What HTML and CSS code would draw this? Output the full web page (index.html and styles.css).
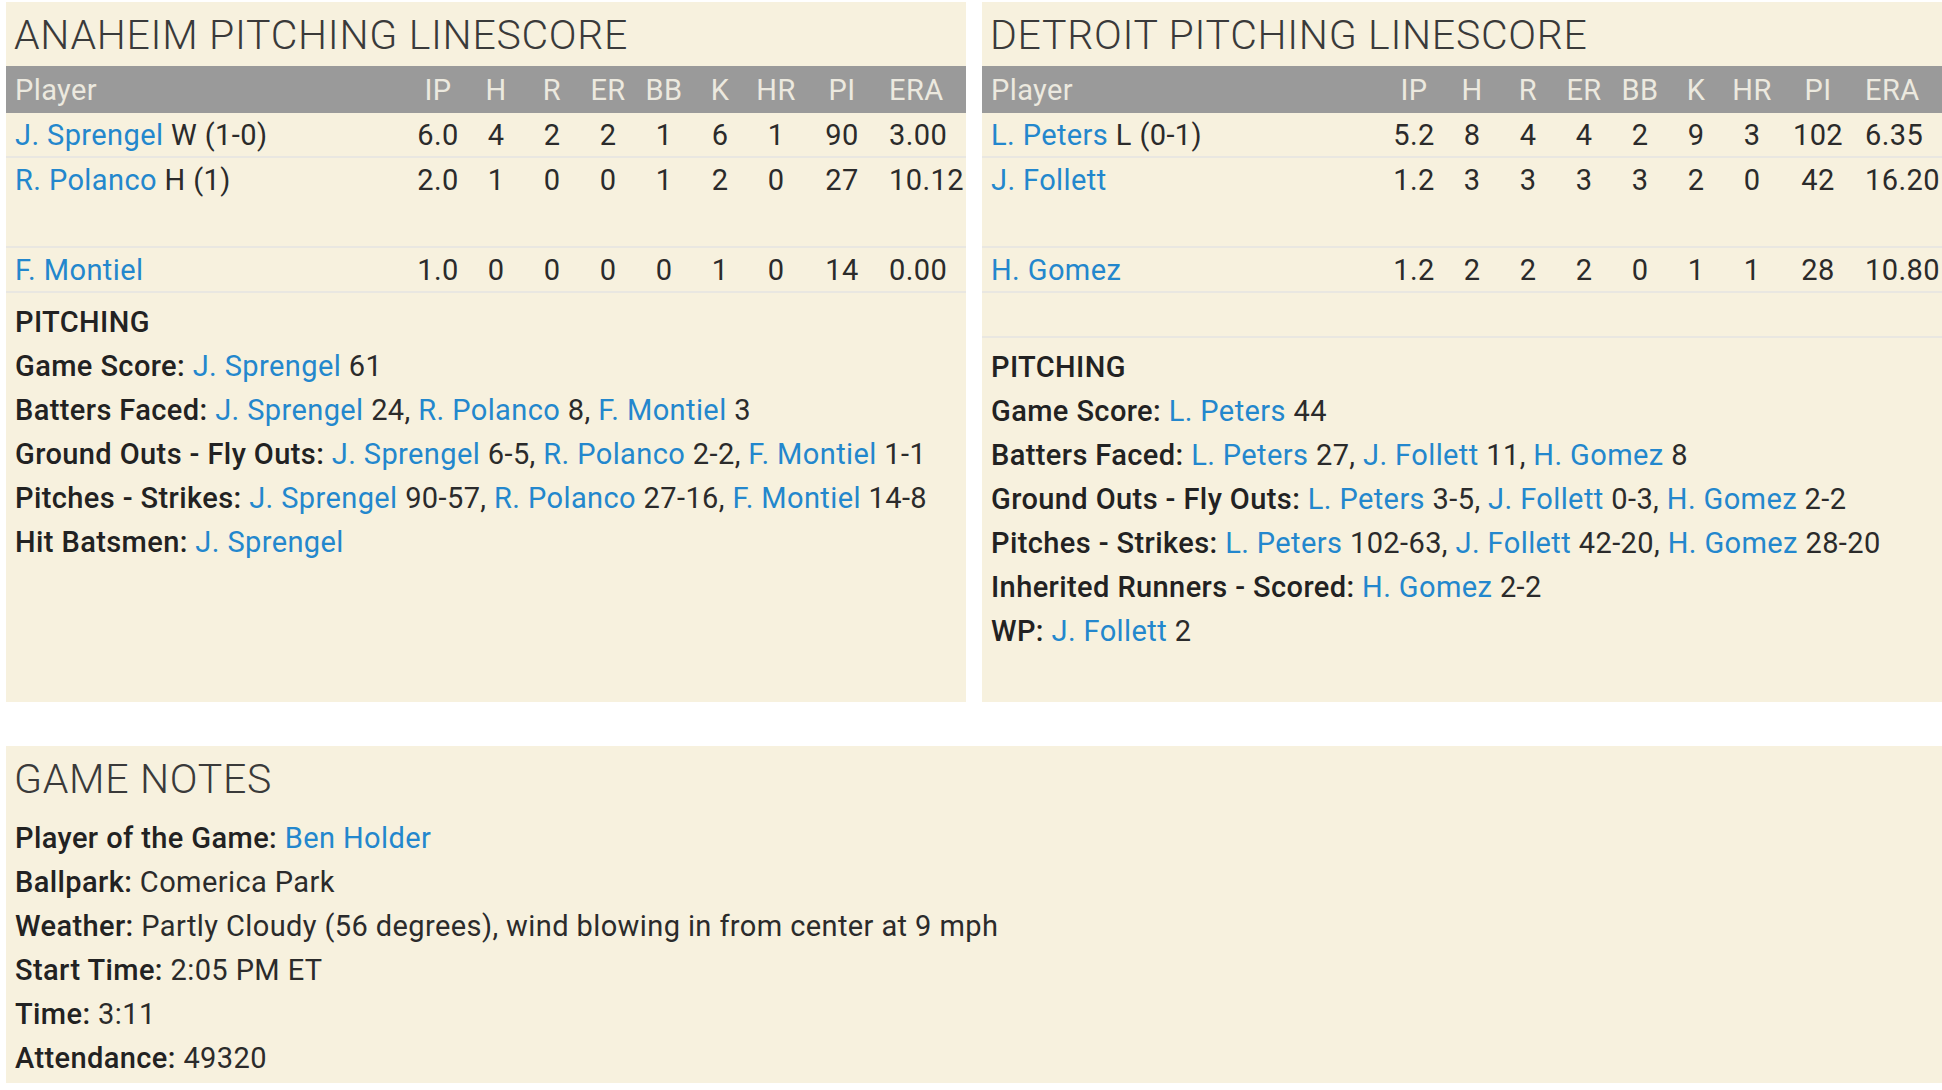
FILE: index.html
```html
<!DOCTYPE html>
<html>
<head>
<meta charset="utf-8">
<link rel="stylesheet" href="styles.css">
</head>
<body>
<div class="page">
  <div class="top">
    <section class="panel">
      <h2 class="title">ANAHEIM PITCHING LINESCORE</h2>
      <table class="line">
        <colgroup><col class="c-player"><col class="c-ip"><col class="c-n"><col class="c-n"><col class="c-n"><col class="c-n"><col class="c-n"><col class="c-n"><col class="c-pi"><col class="c-era"></colgroup>
        <thead><tr><th class="pl">Player</th><th>IP</th><th>H</th><th>R</th><th>ER</th><th>BB</th><th>K</th><th>HR</th><th>PI</th><th class="era">ERA</th></tr></thead>
        <tbody>
          <tr><td class="pl"><a>J. Sprengel</a> W (1-0)</td><td>6.0</td><td>4</td><td>2</td><td>2</td><td>1</td><td>6</td><td>1</td><td>90</td><td class="era">3.00</td></tr>
          <tr class="tall"><td class="pl"><a>R. Polanco</a> H (1)</td><td>2.0</td><td>1</td><td>0</td><td>0</td><td>1</td><td>2</td><td>0</td><td>27</td><td class="era">10.12</td></tr>
          <tr><td class="pl"><a>F. Montiel</a></td><td>1.0</td><td>0</td><td>0</td><td>0</td><td>0</td><td>1</td><td>0</td><td>14</td><td class="era">0.00</td></tr>
        </tbody>
      </table>
      <div class="notes">
        <div class="nl"><b>PITCHING</b></div>
        <div class="nl"><b>Game Score:</b> <a>J. Sprengel</a> 61</div>
        <div class="nl"><b>Batters Faced:</b> <a>J. Sprengel</a> 24, <a>R. Polanco</a> 8, <a>F. Montiel</a> 3</div>
        <div class="nl"><b>Ground Outs - Fly Outs:</b> <a>J. Sprengel</a> 6-5, <a>R. Polanco</a> 2-2, <a>F. Montiel</a> 1-1</div>
        <div class="nl"><b>Pitches - Strikes:</b> <a>J. Sprengel</a> 90-57, <a>R. Polanco</a> 27-16, <a>F. Montiel</a> 14-8</div>
        <div class="nl"><b>Hit Batsmen:</b> <a>J. Sprengel</a></div>
      </div>
    </section>
    <section class="panel">
      <h2 class="title">DETROIT PITCHING LINESCORE</h2>
      <table class="line">
        <colgroup><col class="c-player"><col class="c-ip"><col class="c-n"><col class="c-n"><col class="c-n"><col class="c-n"><col class="c-n"><col class="c-n"><col class="c-pi"><col class="c-era"></colgroup>
        <thead><tr><th class="pl">Player</th><th>IP</th><th>H</th><th>R</th><th>ER</th><th>BB</th><th>K</th><th>HR</th><th>PI</th><th class="era">ERA</th></tr></thead>
        <tbody>
          <tr><td class="pl"><a>L. Peters</a> L (0-1)</td><td>5.2</td><td>8</td><td>4</td><td>4</td><td>2</td><td>9</td><td>3</td><td>102</td><td class="era">6.35</td></tr>
          <tr class="tall"><td class="pl"><a>J. Follett</a></td><td>1.2</td><td>3</td><td>3</td><td>3</td><td>3</td><td>2</td><td>0</td><td>42</td><td class="era">16.20</td></tr>
          <tr><td class="pl"><a>H. Gomez</a></td><td>1.2</td><td>2</td><td>2</td><td>2</td><td>0</td><td>1</td><td>1</td><td>28</td><td class="era">10.80</td></tr>
          <tr><td class="pl"></td><td></td><td></td><td></td><td></td><td></td><td></td><td></td><td></td><td class="era"></td></tr>
        </tbody>
      </table>
      <div class="notes">
        <div class="nl"><b>PITCHING</b></div>
        <div class="nl"><b>Game Score:</b> <a>L. Peters</a> 44</div>
        <div class="nl"><b>Batters Faced:</b> <a>L. Peters</a> 27, <a>J. Follett</a> 11, <a>H. Gomez</a> 8</div>
        <div class="nl"><b>Ground Outs - Fly Outs:</b> <a>L. Peters</a> 3-5, <a>J. Follett</a> 0-3, <a>H. Gomez</a> 2-2</div>
        <div class="nl"><b>Pitches - Strikes:</b> <a>L. Peters</a> 102-63, <a>J. Follett</a> 42-20, <a>H. Gomez</a> 28-20</div>
        <div class="nl"><b>Inherited Runners - Scored:</b> <a>H. Gomez</a> 2-2</div>
        <div class="nl"><b>WP:</b> <a>J. Follett</a> 2</div>
      </div>
    </section>
  </div>
  <section class="panel game">
    <h2 class="title">GAME NOTES</h2>
    <div class="gnotes">
      <div class="nl"><b>Player of the Game:</b> <a>Ben Holder</a></div>
      <div class="nl"><b>Ballpark:</b> Comerica Park</div>
      <div class="nl"><b>Weather:</b> Partly Cloudy (56 degrees), wind blowing in from center at 9 mph</div>
      <div class="nl"><b>Start Time:</b> 2:05 PM ET</div>
      <div class="nl"><b>Time:</b> 3:11</div>
      <div class="nl"><b>Attendance:</b> 49320</div>
    </div>
  </section>
</div>
</body>
</html>
```

FILE: styles.css
```css
html, body {
  margin: 0;
  padding: 0;
  background: #ffffff;
}
body {
  font-family: Roboto, "Liberation Sans", sans-serif;
  color: #2b2b2b;
  font-size: 29px;
  letter-spacing: 0.4px;
}
.page {
  padding: 2px 0 0 6px;
  width: 1936px;
}
.top {
  display: grid;
  grid-template-columns: 960px 960px;
  column-gap: 16px;
}
.panel {
  background: #f7f1de;
  height: 700px;
  display: flex;
  flex-direction: column;
}
.title {
  margin: 9px 0 7px 0;
  padding-left: 8px;
  font-size: 41px;
  line-height: 48px;
  font-weight: 300;
  letter-spacing: 0.7px;
  color: #3a3a3a;
}
a {
  color: #2387cd;
  text-decoration: none;
}
b {
  font-weight: 500;
  color: #222;
}
.line {
  width: 960px;
  table-layout: fixed;
  border-collapse: collapse;
}
.c-player { width: 402px; }
.c-ip { width: 60px; }
.c-n { width: 56px; }
.c-pi { width: 76px; }
.c-era { width: 86px; }
.line th {
  background: #9a9a9a;
  color: #ece9df;
  font-weight: 400;
  height: 47px;
  padding: 0;
  text-align: center;
  white-space: nowrap;
}
.line td {
  height: 43px;
  padding: 0;
  text-align: center;
  border-bottom: 2px solid #e9e7e1;
  white-space: nowrap;
  color: #2b2b2b;
}
.line .pl {
  text-align: left;
  padding-left: 9px;
}
.line .era {
  text-align: left;
  padding-left: 9px;
}
.line tr.tall td {
  height: 88px;
  vertical-align: top;
  line-height: 44px;
}
.notes {
  padding: 7px 0 0 9px;
}
.nl {
  line-height: 44px;
  white-space: nowrap;
}
.game {
  margin-top: 44px;
  height: 337px;
  width: 1936px;
}
.game .title {
  margin-bottom: 13px;
}
.gnotes {
  padding-left: 9px;
}
```
